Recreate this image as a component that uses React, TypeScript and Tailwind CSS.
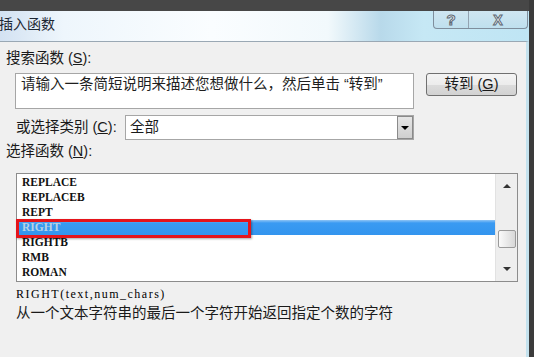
import React from "react";

const items = ["REPLACE", "REPLACEB", "REPT", "RIGHT", "RIGHTB", "RMB", "ROMAN"];

export default function App() {
  return (
    <div className="w-[534px] h-[357px] flex bg-[#3b3b3b] overflow-hidden font-['Liberation_Sans','Noto_Sans_CJK_SC',sans-serif]">
      <div className="w-[529px] flex flex-col">
        <div className="h-[11px] bg-[#474747]" />
        <div className="h-[30px] flex bg-[linear-gradient(90deg,#d3e2f2_0%,#eef6fc_12%,#fafdff_40%,#f2f9fc_62%,#b8d9ea_72%,#c6e8f5_80%,#bfe5f4_100%)]">
          <span className="ml-[-1px] mt-[5px] text-[14px] leading-[16px] text-[#1d2733]">插入函数</span>
          <div className="ml-auto mr-[1px] flex h-[18px] border border-t-0 border-[#7f8e9c] rounded-b-[4px] bg-[linear-gradient(180deg,#cfe6f1,#bfe0ee)]">
            <div className="w-[35px] flex items-center justify-center border-r border-[#93a3b1] text-[15px] font-bold text-white leading-none [-webkit-text-stroke:1px_#5d6873]">?</div>
            <div className="w-[58px] flex items-center justify-center text-[14px] font-bold text-white leading-none [-webkit-text-stroke:1px_#5d6873]">X</div>
          </div>
        </div>
        <div className="flex-1 flex flex-col bg-[#f0f0f0] border-t border-t-[#9aa8b4] border-r-[3px] border-r-[#c4e2ee] pl-[6px] text-[14.5px] text-[#1a1a1a]">
          <div className="mt-[8px] h-[16px] leading-[16px]">
            搜索函数 (<span className="underline">S</span>):
          </div>
          <div className="mt-[7px] flex items-start">
            <div className="ml-[9px] w-[399px] h-[36px] border border-[#a6a6a6] bg-white pl-[5px] pt-[2px] leading-[16px] text-[#1e1e1e] whitespace-nowrap overflow-hidden">
              请输入一条简短说明来描述您想做什么，然后单击 “转到”
            </div>
            <div className="ml-[12px] w-[91px] h-[23px] border border-[#707070] rounded-[3px] bg-[linear-gradient(180deg,#f4f4f4_0%,#ececec_50%,#dcdcdc_51%,#d2d2d2_100%)] flex items-center justify-center leading-none">
              转到 (<span className="underline">G</span>)
            </div>
          </div>
          <div className="mt-[6px] flex h-[25px]">
            <div className="ml-[10px] w-[109px] leading-[25px]">
              或选择类别 (<span className="underline">C</span>):
            </div>
            <div className="w-[289px] h-[25px] border border-[#a6a6a6] bg-white flex">
              <span className="pl-[4px] leading-[23px]">全部</span>
              <div className="ml-auto w-[16px] border border-[#8a8a8a] bg-[linear-gradient(180deg,#e6e6e6,#cfcfcf)] flex items-center justify-center">
                <div className="w-0 h-0 border-l-[4px] border-r-[4px] border-t-[4px] border-l-transparent border-r-transparent border-t-black" />
              </div>
            </div>
          </div>
          <div className="mt-[3px] h-[16px] leading-[16px]">
            选择函数 (<span className="underline">N</span>):
          </div>
          <div className="mt-[14px] ml-[10px] w-[502px] h-[109px] border border-[#8c8c8c] bg-white relative flex">
            <div className="w-[478px] pt-[1px] font-['Liberation_Serif',serif] font-bold text-[11.5px] text-[#111]">
              {items.map((it) => (
                <div
                  key={it}
                  className={
                    it === "RIGHT"
                      ? "h-[15px] leading-[15px] pl-[5px] bg-[linear-gradient(180deg,#8fc4f5_0%,#3a9af2_20%,#3394ee_100%)] text-[#b8d2e4]"
                      : "h-[15px] leading-[15px] pl-[5px]"
                  }
                >
                  {it}
                </div>
              ))}
            </div>
            <div className="w-[22px] flex flex-col bg-[#eeeeee] border-l border-[#e2e2e2]">
              <div className="h-[24px] flex items-center justify-center">
                <div className="w-0 h-0 border-l-[4px] border-r-[4px] border-b-[4px] border-l-transparent border-r-transparent border-b-[#333]" />
              </div>
              <div className="mt-[32px] mx-auto w-[18px] h-[18px] border border-[#9a9a9a] rounded-[2px] bg-[linear-gradient(90deg,#fafafa,#d8d8d8)]" />
              <div className="mt-auto h-[24px] flex items-center justify-center">
                <div className="w-0 h-0 border-l-[4px] border-r-[4px] border-t-[4px] border-l-transparent border-r-transparent border-t-[#333]" />
              </div>
            </div>
            <div className="absolute left-[-1px] top-[45px] w-[235px] h-[19px] border-[3px] border-[#e5141b] shadow-[1px_1px_2px_rgba(0,0,0,0.35)]" />
          </div>
          <div className="mt-[4px] h-[16px] leading-[16px] pl-[10px] font-['Liberation_Serif',serif] text-[12px] tracking-[1.5px] text-black">
            RIGHT(text,num_chars)
          </div>
          <div className="mt-[3px] h-[16px] leading-[16px] pl-[10px] text-[#1a1a1a]">
            从一个文本字符串的最后一个字符开始返回指定个数的字符
          </div>
        </div>
      </div>
    </div>
  );
}
